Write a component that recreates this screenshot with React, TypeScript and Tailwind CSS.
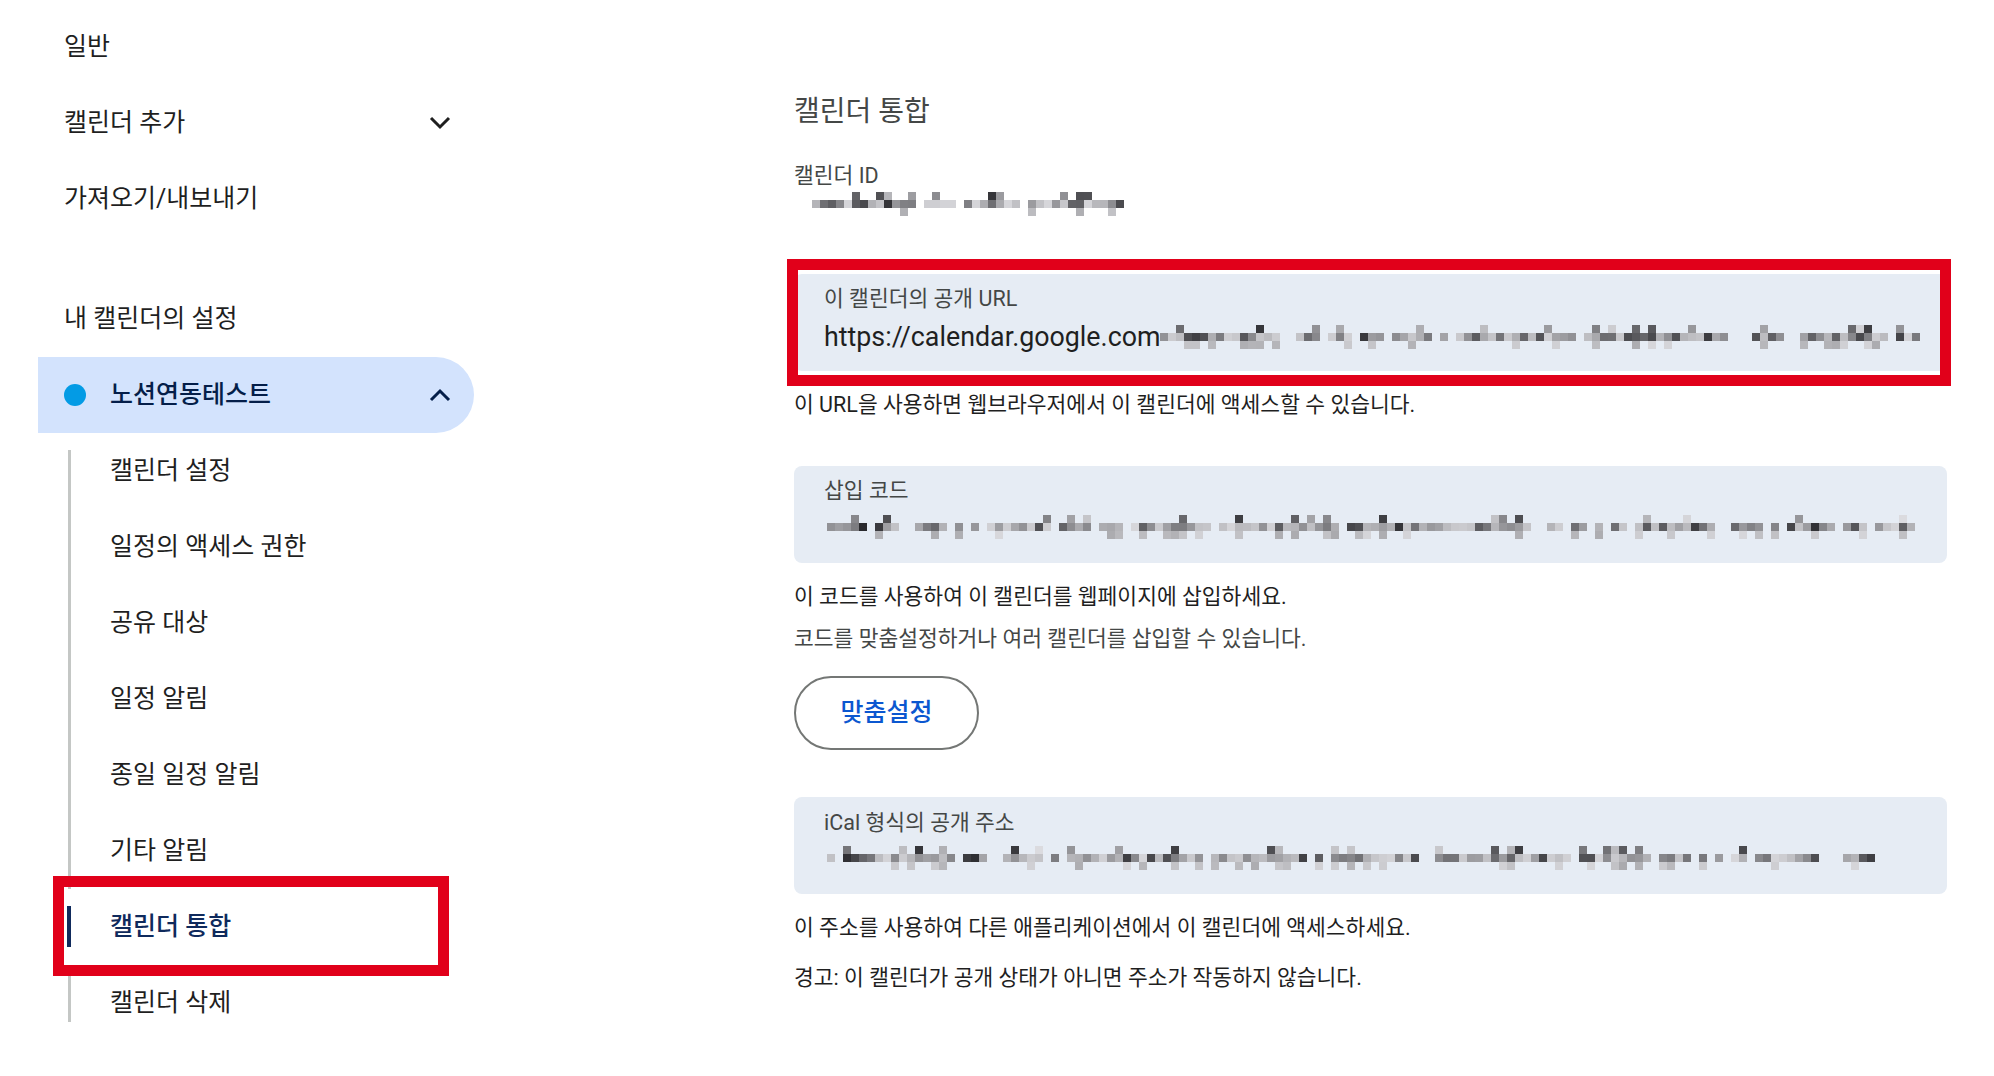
import { useMemo } from 'react'

const subItems = [
  '캘린더 설정',
  '일정의 액세스 권한',
  '공유 대상',
  '일정 알림',
  '종일 일정 알림',
  '기타 알림',
  '캘린더 통합',
  '캘린더 삭제',
]

function mulberry32(a: number) {
  return function () {
    a |= 0
    a = (a + 0x6d2b79f5) | 0
    let t = Math.imul(a ^ (a >>> 15), 1 | a)
    t = (t + Math.imul(t ^ (t >>> 7), 61 | t)) ^ t
    return ((t ^ (t >>> 14)) >>> 0) / 4294967296
  }
}

// pixelated (redacted) text
function Mosaic({ width, seed, cell = 8 }: { width: number; seed: number; cell?: number }) {
  const cells = useMemo(() => {
    const rnd = mulberry32(seed)
    const out: { x: number; y: number; c: number }[] = []
    const cols = Math.floor(width / cell)
    for (let i = 0; i < cols; i++) {
      if (rnd() < 0.16) continue
      const shade = Math.round(35 + Math.pow(rnd(), 0.6) * 180)
      out.push({ x: i * cell, y: cell, c: shade })
      if (rnd() < 0.2) out.push({ x: i * cell, y: 0, c: Math.round(50 + rnd() * 170) })
      if (rnd() < 0.3) out.push({ x: i * cell, y: cell * 2, c: Math.round(170 + rnd() * 45) })
    }
    return out
  }, [width, seed, cell])

  return (
    <svg width={width} height={cell * 3} className="shrink-0">
      {cells.map((c, i) => (
        <rect key={i} x={c.x} y={c.y} width={cell} height={cell} fill={`rgb(${c.c},${c.c},${c.c + 4})`} />
      ))}
    </svg>
  )
}

function ChevronDown() {
  return (
    <svg width="24" height="16" viewBox="0 0 24 16">
      <path d="M3 3l9 9 9-9" fill="none" stroke="#1f1f1f" strokeWidth="3" />
    </svg>
  )
}

function ChevronUp() {
  return (
    <svg width="24" height="16" viewBox="0 0 24 16">
      <path d="M3 13l9-9 9 9" fill="none" stroke="#041e49" strokeWidth="3" />
    </svg>
  )
}

export default function App() {
  return (
    <div className="flex min-h-screen bg-white font-['Roboto','Noto_Sans_CJK_KR',sans-serif] text-[#1f1f1f]">
      {/* Sidebar */}
      <aside className="w-[474px] shrink-0 pl-[38px] pt-[9px]">
        <div className="flex h-[76px] items-center pl-[26px] text-[25px]">일반</div>
        <div className="flex h-[76px] items-center justify-between pl-[26px] pr-[22px] text-[25px]">
          <span>캘린더 추가</span>
          <ChevronDown />
        </div>
        <div className="flex h-[76px] items-center pl-[26px] text-[25px]">가져오기/내보내기</div>

        <div className="mt-[44px] flex h-[76px] items-center pl-[26px] text-[25px]">내 캘린더의 설정</div>

        <div className="flex h-[76px] items-center justify-between rounded-r-full bg-[#d3e3fd] pl-[26px] pr-[22px]">
          <div className="flex items-center gap-[24px]">
            <span className="h-[22px] w-[22px] rounded-full bg-[#039be5]" />
            <span className="text-[25px] font-medium text-[#041e49]">노션연동테스트</span>
          </div>
          <ChevronUp />
        </div>

        {/* Sub navigation */}
        <div className="relative">
          <div className="absolute bottom-[19px] left-[30px] top-[17px] w-[3px] bg-[#c4c7c5]" />
          {subItems.map((label) => {
            const active = label === '캘린더 통합'
            return (
              <div
                key={label}
                className={`relative flex h-[76px] items-center pl-[72px] text-[25px] ${
                  active ? 'bg-white font-medium text-[#0f2a5c]' : ''
                }`}
              >
                {active && (
                  <>
                    <span className="absolute left-[29px] top-[17px] h-[41px] w-[4px] bg-[#0f2a5c]" />
                    <span className="pointer-events-none absolute left-[15px] top-[-13px] h-[100px] w-[396px] border-[11px] border-[#e1001a]" />
                  </>
                )}
                <span>{label}</span>
              </div>
            )
          })}
        </div>
      </aside>

      {/* Main */}
      <main className="ml-[320px] w-[1153px] pt-[94px]">
        <h1 className="text-[28px] leading-[36px] text-[#444746]">캘린더 통합</h1>

        <p className="mt-[32px] text-[21.5px] leading-[28px] text-[#444746]">캘린더 ID</p>
        <div className="mt-[2px] flex h-[24px] items-center pl-[2px]">
          <Mosaic width={333} seed={7} />
        </div>

        {/* Public URL */}
        <div className="relative mt-[58px] rounded-lg bg-[#e6ecf4] pb-[16px] pl-[30px] pt-[11px]">
          <p className="text-[21.5px] leading-[28px] text-[#444746]">이 캘린더의 공개 URL</p>
          <div className="mt-[6px] flex h-[36px] items-center overflow-hidden">
            <span className="text-[26.8px] leading-[36px] text-[#1f1f1f]">https://calendar.google.com</span>
            <Mosaic width={763} seed={21} />
          </div>
          <span className="pointer-events-none absolute -bottom-[15px] -left-[7px] -right-[4px] -top-[15px] border-[11px] border-[#e1001a]" />
        </div>
        <p className="mt-[20px] text-[21.5px] leading-[28px]">이 URL을 사용하면 웹브라우저에서 이 캘린더에 액세스할 수 있습니다.</p>

        {/* Embed code */}
        <div className="mt-[47px] rounded-lg bg-[#e6ecf4] pb-[22px] pl-[30px] pt-[11px]">
          <p className="text-[21.5px] leading-[28px] text-[#444746]">삽입 코드</p>
          <div className="mt-[8px] flex h-[28px] items-center pl-[3px]">
            <Mosaic width={1093} seed={42} />
          </div>
        </div>
        <p className="mt-[20px] text-[21.5px] leading-[28px]">이 코드를 사용하여 이 캘린더를 웹페이지에 삽입하세요.</p>
        <p className="mt-[14px] text-[21.5px] leading-[28px] text-[#444746]">
          코드를 맞춤설정하거나 여러 캘린더를 삽입할 수 있습니다.
        </p>
        <button className="mt-[23px] flex h-[74px] w-[185px] items-center justify-center rounded-full border-2 border-[#747775] text-[25px] font-medium text-[#0b57d0]">
          맞춤설정
        </button>

        {/* iCal */}
        <div className="mt-[47px] rounded-lg bg-[#e6ecf4] pb-[22px] pl-[30px] pt-[12px]">
          <p className="text-[21.5px] leading-[28px] text-[#444746]">iCal 형식의 공개 주소</p>
          <div className="mt-[7px] flex h-[28px] items-center pl-[3px]">
            <Mosaic width={1055} seed={99} />
          </div>
        </div>
        <p className="mt-[20px] text-[21.5px] leading-[28px]">이 주소를 사용하여 다른 애플리케이션에서 이 캘린더에 액세스하세요.</p>
        <p className="mt-[22px] text-[21.5px] leading-[28px]">경고: 이 캘린더가 공개 상태가 아니면 주소가 작동하지 않습니다.</p>
      </main>
    </div>
  )
}
